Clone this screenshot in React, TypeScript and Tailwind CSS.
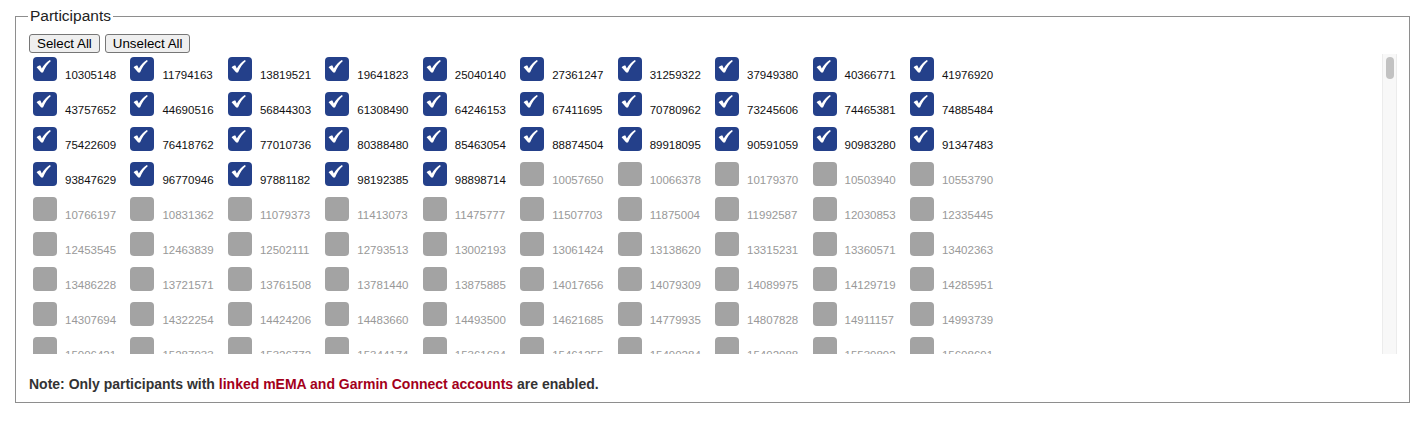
import React from "react";

const rows: string[][] = [
  ["10305148", "11794163", "13819521", "19641823", "25040140", "27361247", "31259322", "37949380", "40366771", "41976920"],
  ["43757652", "44690516", "56844303", "61308490", "64246153", "67411695", "70780962", "73245606", "74465381", "74885484"],
  ["75422609", "76418762", "77010736", "80388480", "85463054", "88874504", "89918095", "90591059", "90983280", "91347483"],
  ["93847629", "96770946", "97881182", "98192385", "98898714", "10057650", "10066378", "10179370", "10503940", "10553790"],
  ["10766197", "10831362", "11079373", "11413073", "11475777", "11507703", "11875004", "11992587", "12030853", "12335445"],
  ["12453545", "12463839", "12502111", "12793513", "13002193", "13061424", "13138620", "13315231", "13360571", "13402363"],
  ["13486228", "13721571", "13761508", "13781440", "13875885", "14017656", "14079309", "14089975", "14129719", "14285951"],
  ["14307694", "14322254", "14424206", "14483660", "14493500", "14621685", "14779935", "14807828", "14911157", "14993739"],
  ["15006421", "15287933", "15326772", "15344174", "15361684", "15461255", "15490284", "15492088", "15539892", "15608691"],
];

const CHECKED = 35;

function CheckMark() {
  return (
    <svg width="24" height="24" viewBox="0 0 24 24" className="block">
      <path
        d="M3.6 10.2 C4.8 9 6.2 8.4 7.4 8.5 L8.8 11.4 C10.8 7.8 13.4 4.9 16.8 2.9 L17.9 4.1 C14.8 6.7 12 10.6 10 15.4 L8.2 15.6 Z"
        fill="#ffffff"
      />
    </svg>
  );
}

function Item({ id, checked }: { id: string; checked: boolean }) {
  return (
    <div className="flex w-[97.44px] shrink-0 items-start">
      <div
        className={
          checked
            ? "ml-[4px] mt-[3px] h-[24px] w-[24px] shrink-0 rounded-[4px] bg-[#24408a]"
            : "ml-[4px] mt-[3px] h-[24px] w-[24px] shrink-0 rounded-[4px] bg-[#a3a3a3]"
        }
      >
        {checked ? <CheckMark /> : null}
      </div>
      <span
        className={
          checked
            ? "ml-[8px] mt-[14px] text-[11.5px] leading-[14px] text-[#111111] whitespace-nowrap"
            : "ml-[8px] mt-[14px] text-[11.5px] leading-[14px] text-[#999999] whitespace-nowrap"
        }
      >
        {id}
      </span>
    </div>
  );
}

export default function App() {
  let index = 0;
  return (
    <div
      className="h-[424px] w-[1412px] bg-white pl-[15px] pt-[7px]"
      style={{ fontFamily: '"Liberation Sans", Arial, sans-serif' }}
    >
      <fieldset className="h-[396px] w-[1395px] border border-[#8e8e8e] pl-[13px] pr-[12px] pt-[9px]">
        <legend className="-ml-[1px] px-[2px] text-[15.5px] leading-[18px] text-[#222222]">Participants</legend>
        <div className="flex h-[20px] gap-[5px]">
          <button className="h-[19px] rounded-[3px] border border-[#767676] bg-[#efefef] px-[7px] text-[13.33px] leading-[15px] text-black">
            Select All
          </button>
          <button className="h-[19px] rounded-[3px] border border-[#767676] bg-[#efefef] px-[7px] text-[13.33px] leading-[15px] text-black">
            Unselect All
          </button>
        </div>
        <div className="flex h-[300px]">
          <div className="flex-1 overflow-hidden">
            {rows.map((row, r) => (
              <div key={r} className="flex h-[35px]">
                {row.map((id) => {
                  const checked = index < CHECKED;
                  index++;
                  return <Item key={id} id={id} checked={checked} />;
                })}
              </div>
            ))}
          </div>
          <div className="h-[300px] w-[15px] shrink-0 border-l border-r border-[#ececec] bg-[#f8f8f8] pl-[3px] pt-[3px]">
            <div className="h-[22px] w-[8px] rounded-full bg-[#c2c2c2]" />
          </div>
        </div>
        <p className="mt-[22px] whitespace-nowrap text-[14px] font-bold leading-[16px] text-[#333333]">
          Note: Only participants with <span className="text-[#a3001b]">linked mEMA and Garmin Connect accounts</span> are enabled.
        </p>
      </fieldset>
    </div>
  );
}
